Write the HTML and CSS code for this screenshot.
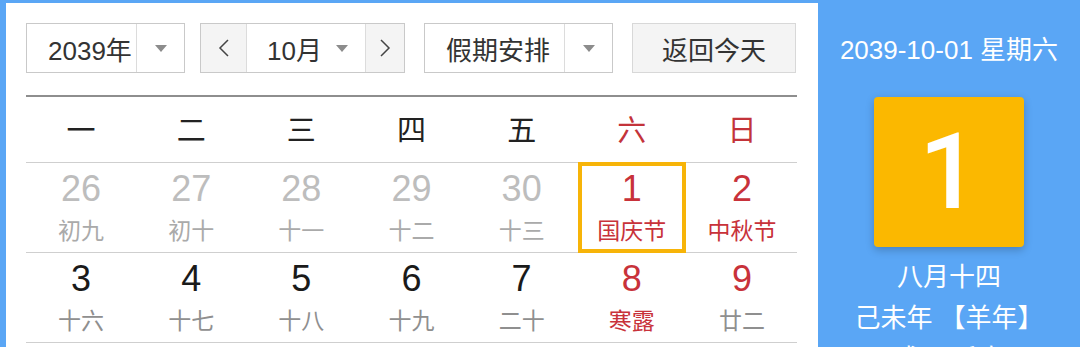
FILE: index.html
```html
<!DOCTYPE html>
<html lang="zh-CN">
<head>
<meta charset="utf-8">
<title>万年历</title>
<link rel="stylesheet" href="styles.css">
</head>
<body>
<div class="app">
  <div class="main">
    <div class="toolbar">
      <div class="ctl year">
        <div class="ctl-text">2039年</div>
        <div class="ctl-arrow"><span class="tri"></span></div>
      </div>
      <div class="ctl month">
        <div class="nav prev"><svg width="12" height="20" viewBox="0 0 12 20"><polyline points="10,2 2,10 10,18" fill="none" stroke="#444" stroke-width="1.5"/></svg></div>
        <div class="month-mid"><span class="month-text">10月</span><span class="tri"></span></div>
        <div class="nav next"><svg width="12" height="20" viewBox="0 0 12 20"><polyline points="2,2 10,10 2,18" fill="none" stroke="#444" stroke-width="1.5"/></svg></div>
      </div>
      <div class="ctl holiday">
        <div class="ctl-text">假期安排</div>
        <div class="ctl-arrow"><span class="tri"></span></div>
      </div>
      <div class="ctl today">返回今天</div>
    </div>
    <div class="cal">
      <div class="week">
        <div>一</div><div>二</div><div>三</div><div>四</div><div>五</div><div class="red">六</div><div class="red">日</div>
      </div>
      <div class="row">
        <div class="cell other"><div class="num">26</div><div class="lunar">初九</div></div>
        <div class="cell other"><div class="num">27</div><div class="lunar">初十</div></div>
        <div class="cell other"><div class="num">28</div><div class="lunar">十一</div></div>
        <div class="cell other"><div class="num">29</div><div class="lunar">十二</div></div>
        <div class="cell other"><div class="num">30</div><div class="lunar">十三</div></div>
        <div class="cell holi selected"><div class="num">1</div><div class="lunar">国庆节</div></div>
        <div class="cell holi"><div class="num">2</div><div class="lunar">中秋节</div></div>
      </div>
      <div class="row">
        <div class="cell"><div class="num">3</div><div class="lunar">十六</div></div>
        <div class="cell"><div class="num">4</div><div class="lunar">十七</div></div>
        <div class="cell"><div class="num">5</div><div class="lunar">十八</div></div>
        <div class="cell"><div class="num">6</div><div class="lunar">十九</div></div>
        <div class="cell"><div class="num">7</div><div class="lunar">二十</div></div>
        <div class="cell holi"><div class="num">8</div><div class="lunar">寒露</div></div>
        <div class="cell weekend"><div class="num">9</div><div class="lunar">廿二</div></div>
      </div>
    </div>
  </div>
  <aside class="panel">
    <div class="p-date">2039-10-01 星期六</div>
    <div class="p-box">1</div>
    <div class="p-line p-lunar">八月十四</div>
    <div class="p-line">己未年 【羊年】</div>
    <div class="p-line">甲戌月 壬寅日</div>
  </aside>
</div>
</body>
</html>
```
FILE: styles.css
```css
* { box-sizing: border-box; }
html, body { margin: 0; padding: 0; }
body {
  width: 1080px;
  height: 347px;
  overflow: hidden;
  background: #fff;
  font-family: "Liberation Sans", "Noto Sans CJK SC", sans-serif;
  color: #333;
}
.app {
  display: flex;
  height: 347px;
  overflow: hidden;
}
.main {
  width: 818px;
  flex: none;
  border-left: 6px solid #5aa6f5;
  border-top: 3px solid #5aa6f5;
  padding: 20px 21px 0 20px;
  background: #fff;
}
.toolbar {
  display: flex;
  height: 50px;
}
.ctl {
  display: flex;
  height: 50px;
  border: 1px solid #c9c9c9;
  background: #fff;
  font-size: 26px;
  color: #333;
  align-items: stretch;
}
.year { width: 159px; }
.month { width: 205px; margin-left: 15px; }
.holiday { width: 189px; margin-left: 19px; }
.today {
  width: 164px;
  margin-left: 19px;
  background: #f4f4f4;
  border-color: #d8d8d8;
  justify-content: center;
  align-items: center;
}
.ctl-text {
  flex: 1;
  display: flex;
  align-items: center;
  padding-left: 21px;
  border-right: 1px solid #dcdcdc;
}
.ctl-arrow {
  width: 47px;
  display: flex;
  align-items: center;
  justify-content: center;
}
.tri {
  width: 0;
  height: 0;
  border-left: 6px solid transparent;
  border-right: 6px solid transparent;
  border-top: 7px solid #8c8c8c;
}
.nav {
  display: flex;
  align-items: center;
  justify-content: center;
  background: #f4f4f4;
}
.prev { width: 46px; border-right: 1px solid #dcdcdc; }
.next { width: 39px; border-left: 1px solid #dcdcdc; }
.month-mid {
  flex: 1;
  display: flex;
  align-items: center;
  padding-left: 20px;
  gap: 14px;
}
.cal {
  margin-top: 22px;
  border-top: 2px solid #8e8e8e;
}
.week {
  display: grid;
  grid-template-columns: repeat(7, 1fr);
  height: 66px;
  border-bottom: 1px solid #cfcfcf;
  font-size: 29px;
  color: #222;
}
.week > div {
  display: flex;
  align-items: center;
  justify-content: center;
  padding-bottom: 4px;
}
.week .red { color: #c3333a; }
.row {
  display: grid;
  grid-template-columns: repeat(7, 1fr);
  height: 90px;
  border-bottom: 1px solid #cfcfcf;
}
.cell {
  display: flex;
  flex-direction: column;
  align-items: center;
  padding-top: 7px;
}
.num {
  font-size: 36px;
  line-height: 38px;
  color: #1a1a1a;
}
.lunar {
  margin-top: 10px;
  font-size: 23px;
  line-height: 26px;
  color: #8f8f8f;
}
.other .num { color: #bdbdbd; }
.other .lunar { color: #aaaaaa; }
.holi .num, .holi .lunar { color: #c8323a; }
.weekend .num { color: #c8323a; }
.selected {
  border: 4px solid #f7b408;
  margin: -1px 1px -1px 1px;
  padding-top: 4px;
}
.panel {
  flex: 1;
  background: #5aa6f5;
  color: #fff;
  display: flex;
  flex-direction: column;
  align-items: center;
  padding-top: 35px;
  overflow: hidden;
}
.panel > * { flex-shrink: 0; }
.p-date {
  font-size: 26px;
  line-height: 30px;
}
.p-box {
  margin-top: 32px;
  width: 150px;
  height: 150px;
  background: #fbb800;
  border-radius: 4px;
  box-shadow: 0 3px 8px rgba(0, 0, 0, 0.22);
  display: flex;
  align-items: center;
  justify-content: center;
  font-family: Roboto, "Liberation Sans", sans-serif;
  font-weight: 500;
  font-size: 106px;
  line-height: 1;
  color: #fff;
}
.p-line {
  font-size: 26px;
  line-height: 30px;
  margin-top: 11px;
}
.p-lunar { margin-top: 15px; }
```
